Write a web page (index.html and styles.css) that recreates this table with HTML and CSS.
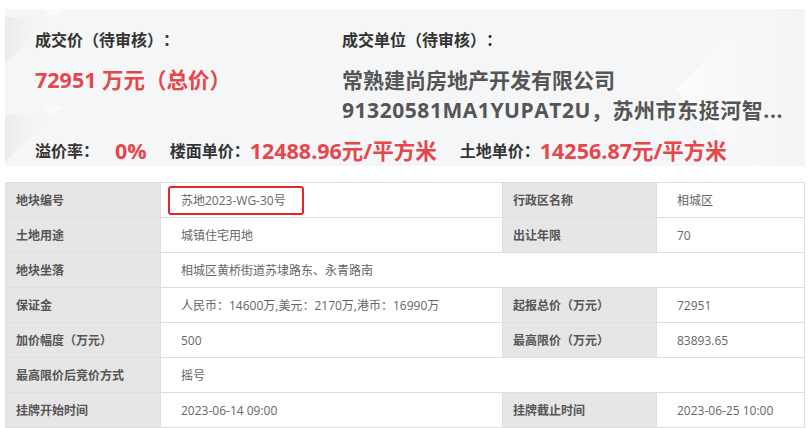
FILE: index.html
```html
<!DOCTYPE html>
<html lang="zh-CN">
<head>
<meta charset="utf-8">
<title>成交信息</title>
<link rel="stylesheet" href="styles.css">
</head>
<body>
<div class="page">
  <section class="deal">
    <svg class="deco" width="800" height="157" viewBox="0 0 800 157" aria-hidden="true">
      <defs>
        <linearGradient id="gl" x1="0" y1="0" x2="1" y2="0">
          <stop offset="0" stop-color="#e9ebed"/>
          <stop offset="1" stop-color="#f5f6f7" stop-opacity="0"/>
        </linearGradient>
        <linearGradient id="gr" x1="0" y1="0" x2="1" y2="0">
          <stop offset="0" stop-color="#fcfcfc"/>
          <stop offset="1" stop-color="#f3f4f5"/>
        </linearGradient>
      </defs>
      <polygon points="0,8 47,8 0,55" fill="url(#gl)"/>
      <polygon points="38,0 58,0 47,8" fill="#fbfbfc"/>
      <polygon points="0,106 47,106 0,153" fill="url(#gl)"/>
      <polygon points="38,98 58,98 47,106" fill="#fbfbfc"/>
      <polygon points="670,81 751,0 800,0 800,157 746,157" fill="url(#gr)"/>
    </svg>
    <div class="deal-body">
      <div class="deal-grid">
        <div class="col-price">
          <div class="label">成交价（待审核）：</div>
          <div class="price">72951 万元（总价）</div>
        </div>
        <div class="col-unit">
          <div class="label">成交单位（待审核）：</div>
          <div class="company-block">
            <div class="company">常熟建尚房地产开发有限公司</div>
            <div class="company company-code">91320581MA1YUPAT2U，苏州市东挺河智...</div>
          </div>
        </div>
      </div>
      <div class="stats">
        <div class="stat"><span class="stat-label">溢价率：</span><span class="stat-value">0%</span></div>
        <div class="stat"><span class="stat-label">楼面单价：</span><span class="stat-value">12488.96元/平方米</span></div>
        <div class="stat"><span class="stat-label">土地单价：</span><span class="stat-value">14256.87元/平方米</span></div>
      </div>
    </div>
  </section>

  <table class="info">
    <colgroup>
      <col class="c1"><col class="c2"><col class="c3"><col class="c4">
    </colgroup>
    <tbody>
      <tr>
        <td class="k">地块编号</td>
        <td><span class="mark">苏地2023-WG-30号</span></td>
        <td class="k">行政区名称</td>
        <td>相城区</td>
      </tr>
      <tr>
        <td class="k">土地用途</td>
        <td>城镇住宅用地</td>
        <td class="k">出让年限</td>
        <td>70</td>
      </tr>
      <tr>
        <td class="k">地块坐落</td>
        <td colspan="3">相城区黄桥街道苏埭路东、永青路南</td>
      </tr>
      <tr>
        <td class="k">保证金</td>
        <td>人民币：14600万,美元：2170万,港币：16990万</td>
        <td class="k">起报总价（万元）</td>
        <td>72951</td>
      </tr>
      <tr>
        <td class="k">加价幅度（万元）</td>
        <td>500</td>
        <td class="k">最高限价（万元）</td>
        <td>83893.65</td>
      </tr>
      <tr>
        <td class="k">最高限价后竞价方式</td>
        <td colspan="3">摇号</td>
      </tr>
      <tr>
        <td class="k">挂牌开始时间</td>
        <td>2023-06-14 09:00</td>
        <td class="k">挂牌截止时间</td>
        <td>2023-06-25 10:00</td>
      </tr>
    </tbody>
  </table>
</div>
</body>
</html>
```

FILE: styles.css
```css
* {
  box-sizing: border-box;
}

html, body {
  margin: 0;
  background: #ffffff;
}

body {
  font-family: "Open Sans", "Noto Sans CJK SC", sans-serif;
  text-spacing-trim: space-all;
}

.page {
  padding: 9px 0 0 5px;
}

.deal {
  position: relative;
  width: 800px;
  height: 157px;
  padding: 19px 30px 0 30px;
  background: #f5f6f7;
  overflow: hidden;
}

.deco {
  position: absolute;
  left: 0;
  top: 0;
}

.deal-body {
  position: relative;
}

.deal-grid {
  display: flex;
}

.col-price {
  width: 307px;
  flex: none;
}

.col-unit {
  flex: 1;
  min-width: 0;
}

.label {
  font-size: 16px;
  line-height: 24px;
  font-weight: 700;
  color: #333333;
}

.price {
  margin-top: 13px;
  font-size: 21.5px;
  line-height: 30px;
  font-weight: 700;
  color: #e5474d;
  white-space: nowrap;
}

.company-block {
  margin-top: 13px;
}

.company {
  font-size: 21px;
  line-height: 30px;
  font-weight: 700;
  color: #555555;
  white-space: nowrap;
}

.company-code {
  letter-spacing: 0.55px;
}

.stats {
  display: flex;
  align-items: center;
  height: 28px;
  margin-top: 12px;
}

.stat {
  display: flex;
  align-items: center;
  margin-right: 23px;
  line-height: 28px;
}

.stat-label {
  min-width: 80px;
  font-size: 16px;
  font-weight: 700;
  color: #333333;
}

.stat-value {
  font-size: 21.5px;
  font-weight: 700;
  color: #e5474d;
  white-space: nowrap;
}

.info {
  margin-top: 16px;
  width: 799px;
  border-collapse: collapse;
  table-layout: fixed;
  font-size: 12px;
}

.c1 { width: 155px; }
.c2 { width: 342px; }
.c3 { width: 154px; }
.c4 { width: 148px; }

.info td {
  height: 35px;
  padding: 0 0 0 20px;
  border: 1px solid #dedede;
  color: #666666;
  white-space: nowrap;
  vertical-align: middle;
}

.info td.k {
  padding-left: 10px;
  background: #e6e6e6;
  color: #555555;
  font-weight: 700;
}

.mark {
  display: inline-block;
  margin-left: -13px;
  padding: 0 16px 0 11px;
  line-height: 25px;
  border: 2px solid #e8262b;
  border-radius: 3px;
}
```
